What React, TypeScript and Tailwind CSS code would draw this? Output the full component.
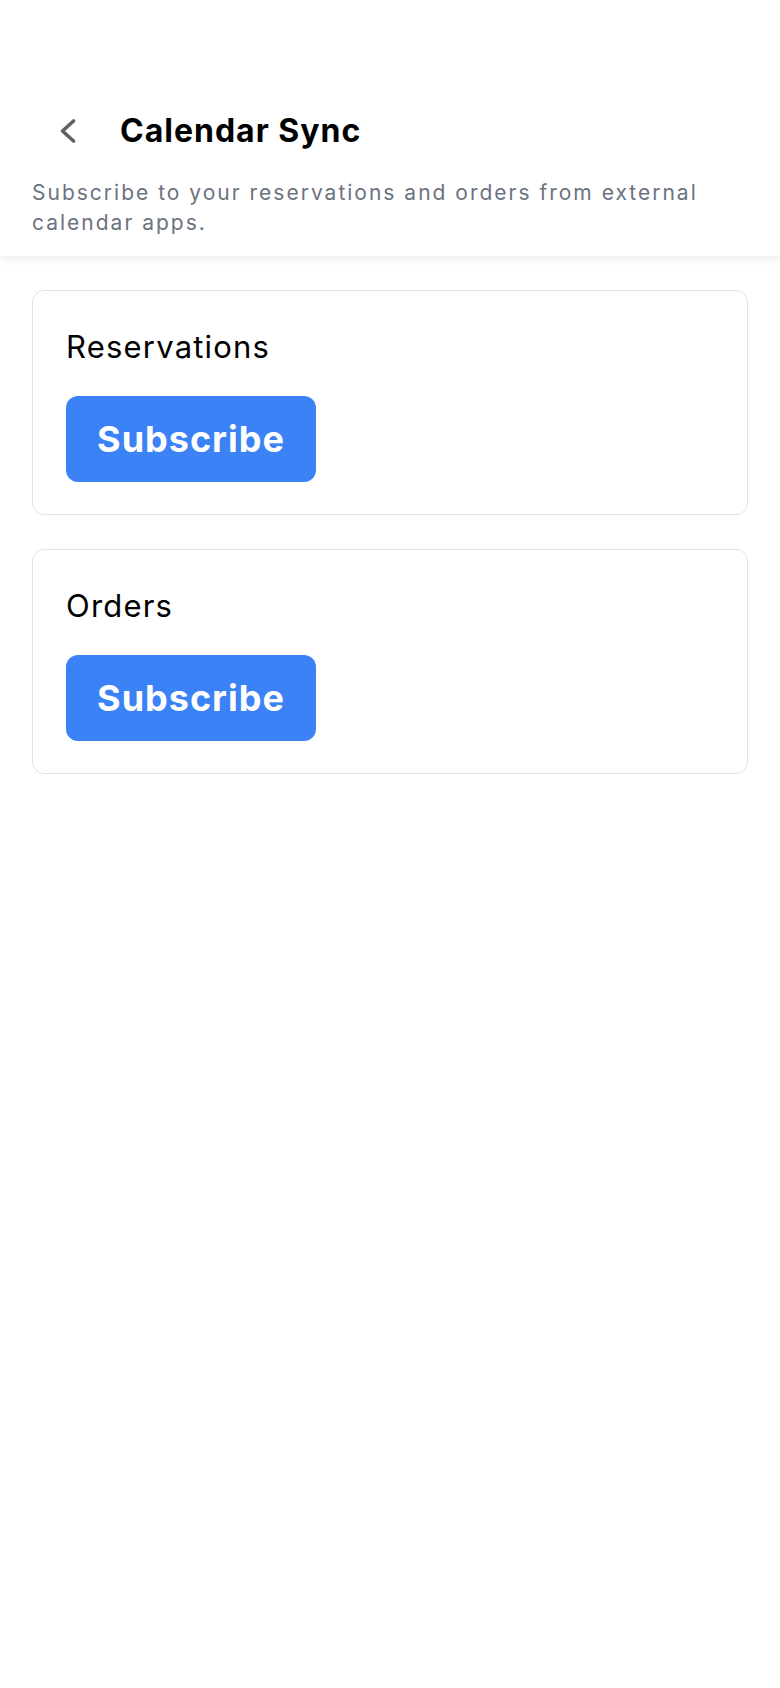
import React from 'react';

const font = { fontFamily: 'Inter, "Noto Sans", sans-serif' };

function ChevronLeft() {
  return (
    <svg width="18" height="24" viewBox="0 0 18 24" fill="none">
      <polyline
        points="14.5,2 3.5,12 14.5,22"
        stroke="#606060"
        strokeWidth="3.6"
        strokeLinecap="round"
        strokeLinejoin="round"
      />
    </svg>
  );
}

function SyncCard({ title }: { title: string }) {
  return (
    <div className="rounded-xl border border-[#e2e2e2] bg-white pl-[33px] pt-[36px] pb-[32px]">
      <h2 className="text-[31px] leading-[40px] font-normal tracking-[1.2px] text-black">{title}</h2>
      <button
        type="button"
        className="mt-[29px] flex h-[86px] w-[250px] items-center justify-center rounded-xl bg-[#3b82f6] text-[36px] font-bold tracking-[1px] text-white"
      >
        Subscribe
      </button>
    </div>
  );
}

export default function App() {
  return (
    <div className="min-h-[1688px] w-full bg-white" style={font}>
      <header className="relative z-10 bg-white px-8 pt-[111px] pb-[18px] shadow-[0_4px_8px_rgba(0,0,0,0.07)]">
        <div className="flex h-10 items-center">
          <div className="flex w-[88px] items-center pl-[27px]">
            <ChevronLeft />
          </div>
          <h1 className="text-[32px] leading-[40px] font-bold tracking-[1px] text-black">Calendar Sync</h1>
        </div>
        <p className="mt-[27px] text-[21px] leading-[30px] tracking-[2px] text-[#6b7280]">
          Subscribe to your reservations and orders from external calendar apps.
        </p>
      </header>

      <main className="flex flex-col gap-[34px] px-8 pt-[34px]">
        <SyncCard title="Reservations" />
        <SyncCard title="Orders" />
      </main>
    </div>
  );
}
